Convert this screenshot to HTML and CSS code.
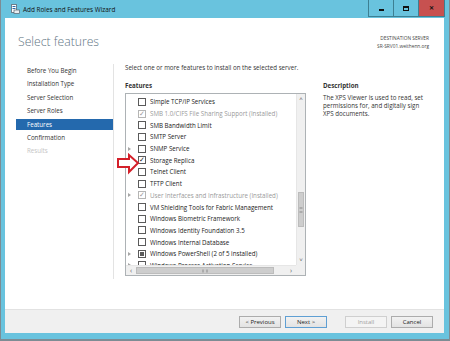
FILE: index.html
```html
<!DOCTYPE html>
<html lang="en">
<head>
  <meta charset="UTF-8" />
  <title>Add Roles and Features Wizard</title>
  <link rel="stylesheet" href="styles.css">
</head>
<body>

<div class="window">

  <div class="titlebar">
    <svg class="app-icon" width="9" height="10" viewBox="0 0 9 10">
      <rect x="0.5" y="0.5" width="5" height="8" fill="#fff" stroke="#6b7f8c"/>
      <rect x="1.5" y="2" width="3" height="1" fill="#2d6aa8"/>
      <rect x="1.5" y="4" width="3" height="1" fill="#2d6aa8"/>
      <rect x="3" y="6" width="5.5" height="3.5" fill="#e9eef2" stroke="#55636d" stroke-width="0.7"/>
    </svg>
    <span class="title-text">Add Roles and Features Wizard</span>
    <div class="win-buttons">
      <div class="win-btn"><span class="min-glyph"></span></div>
      <div class="win-btn"><span class="max-glyph"></span></div>
      <div class="win-btn close">&#x2715;</div>
    </div>
  </div>

  <div class="client">

    <div class="header">
      <h1>Select features</h1>
      <div class="dest">
        <div>DESTINATION SERVER</div>
        <div>SR-SRV01.weithenn.org</div>
      </div>
    </div>

    <div class="main">
      <nav class="steps">
        <div class="step">Before You Begin</div>
        <div class="step">Installation Type</div>
        <div class="step">Server Selection</div>
        <div class="step">Server Roles</div>
        <div class="step active">Features</div>
        <div class="step">Confirmation</div>
        <div class="step disabled">Results</div>
      </nav>

      <section class="content">
        <p class="intro">Select one or more features to install on the selected server.</p>
        <div class="columns">
          <div class="features">
            <div class="label">Features</div>
            <div class="listbox">
              <div class="items">
                <div class="item"><span class="exp"></span><span class="cb"></span>Simple TCP/IP Services</div>
                <div class="item off"><span class="exp"></span><span class="cb on">&#x2713;</span>SMB 1.0/CIFS File Sharing Support (Installed)</div>
                <div class="item"><span class="exp"></span><span class="cb"></span>SMB Bandwidth Limit</div>
                <div class="item"><span class="exp"></span><span class="cb"></span>SMTP Server</div>
                <div class="item"><span class="exp tri"></span><span class="cb"></span>SNMP Service</div>
                <div class="item"><span class="exp"></span><span class="cb on">&#x2713;</span>Storage Replica</div>
                <div class="item"><span class="exp"></span><span class="cb"></span>Telnet Client</div>
                <div class="item"><span class="exp"></span><span class="cb"></span>TFTP Client</div>
                <div class="item off"><span class="exp tri"></span><span class="cb on">&#x2713;</span>User Interfaces and Infrastructure (Installed)</div>
                <div class="item"><span class="exp"></span><span class="cb"></span>VM Shielding Tools for Fabric Management</div>
                <div class="item"><span class="exp"></span><span class="cb"></span>Windows Biometric Framework</div>
                <div class="item"><span class="exp"></span><span class="cb"></span>Windows Identity Foundation 3.5</div>
                <div class="item"><span class="exp"></span><span class="cb"></span>Windows Internal Database</div>
                <div class="item"><span class="exp tri"></span><span class="cb part"><i></i></span>Windows PowerShell (2 of 5 installed)</div>
                <div class="item"><span class="exp tri"></span><span class="cb"></span>Windows Process Activation Service</div>
              </div>
              <div class="vscroll">
                <div class="arrow">&#x2C4;</div>
                <div class="vthumb"></div>
                <div class="track"></div>
                <div class="arrow">&#x2C5;</div>
              </div>
              <div class="hscroll">
                <div class="arrow">&#x2039;</div>
                <div class="hthumb"></div>
                <div class="track"></div>
                <div class="arrow">&#x203A;</div>
              </div>
              <div class="corner"></div>
            </div>
          </div>
          <div class="description">
            <div class="label">Description</div>
            <p>The XPS Viewer is used to read, set<br>permissions for, and digitally sign<br>XPS documents.</p>
          </div>
        </div>
      </section>
    </div>

    <div class="footer">
      <button class="btn">&lt; Previous</button>
      <button class="btn default">Next &gt;</button>
      <button class="btn install" disabled>Install</button>
      <button class="btn">Cancel</button>
    </div>

    <!-- callout arrow drawn over the list -->
    <svg class="callout" width="26" height="22" viewBox="0 0 26 22">
      <path d="M2,6 H13 V2 L22,10 L13,19 V14 H2 Z" fill="#fff" stroke="#d4202a" stroke-width="2" stroke-linejoin="miter"/>
    </svg>
  </div>

</div>

</body>
</html>
```

FILE: styles.css
```css
* {
  margin: 0;
  padding: 0;
  box-sizing: border-box;
}

body {
  font-family: 'Open Sans', 'Liberation Sans', sans-serif;
  background: #fff;
  color: #333;
}

.window {
  width: 450px;
  height: 341px;
  background: #69c3de;
  border-left: 1px solid #7d8c94;
  border-right: 1px solid #7d8c94;
  border-bottom: 2px solid #7d8c94;
  display: flex;
  flex-direction: column;
}

/* title bar */
.titlebar {
  height: 18px;
  display: flex;
  align-items: center;
  padding-left: 10px;
}

.app-icon {
  margin-right: 3px;
}

.title-text {
  font-size: 6.4px;
  color: #111;
}

.win-buttons {
  margin-left: auto;
  margin-right: 4px;
  align-self: flex-start;
  display: flex;
  height: 17px;
}

.win-btn {
  width: 26px;
  height: 17px;
  border: 1px solid #3d7f92;
  border-top: none;
  margin-left: -1px;
  display: flex;
  align-items: center;
  justify-content: center;
  font-size: 6px;
  font-weight: bold;
  color: #111;
}

.win-btn.close {
  background: #c75150;
  width: 27px;
}

.min-glyph {
  width: 5px;
  height: 2px;
  background: #111;
  margin-top: 3px;
}

.max-glyph {
  width: 6px;
  height: 5px;
  border: 1px solid #111;
  border-top-width: 2px;
}

/* client area */
.client {
  position: relative;
  flex: 1;
  margin: 0 5px 6px 4px;
  background: #fff;
  display: flex;
  flex-direction: column;
}

.header {
  height: 46px;
  display: flex;
  justify-content: space-between;
  padding: 15px 15px 0 13px;
}

.header h1 {
  font-size: 12.2px;
  font-weight: 300;
  color: #5f7584;
  line-height: 18px;
}

.dest {
  text-align: right;
  font-size: 4.8px;
  line-height: 8px;
  color: #444;
  padding-top: 1px;
}

.main {
  flex: 1;
  display: flex;
}

.steps {
  width: 109px;
  padding: 0 0 0 11px;
  border-right: 1px solid #e3e3e3;
  margin-bottom: 30px;
}

.step {
  height: 11px;
  margin-bottom: 2.4px;
  padding-left: 11px;
  font-size: 6.2px;
  line-height: 11px;
  color: #333;
}

.step:first-child {
  margin-top: 1px;
}

.step.active {
  background: #2469ad;
  color: #fff;
}

.step.disabled {
  color: #c4c4c4;
}

.content {
  flex: 1;
  padding-left: 11px;
}

.intro {
  font-size: 6.2px;
  line-height: 10px;
  margin-top: -1px;
  color: #333;
}

.columns {
  display: flex;
  margin-top: 8px;
}

.label {
  font-size: 6.2px;
  font-weight: bold;
  color: #333;
  line-height: 10px;
  margin-bottom: 2px;
}

.features {
  width: 181px;
}

.listbox {
  height: 183px;
  border: 1px solid #adb2b5;
  display: grid;
  grid-template-columns: 1fr 9px;
  grid-template-rows: 1fr 10px;
}

.items {
  overflow: hidden;
  padding-top: 2px;
}

.item {
  height: 11.7px;
  display: flex;
  align-items: center;
  font-size: 6.2px;
  color: #222;
  white-space: nowrap;
}

.item.off {
  color: #9a9a9a;
}

.exp {
  width: 12px;
  flex-shrink: 0;
  padding-left: 2px;
}

.exp.tri::before {
  content: '';
  display: block;
  width: 0;
  height: 0;
  border-top: 2.5px solid transparent;
  border-bottom: 2.5px solid transparent;
  border-left: 3px solid #a6a6a6;
}

.cb {
  width: 8px;
  height: 8px;
  border: 1px solid #5a5a5a;
  background: #fff;
  margin-right: 4px;
  flex-shrink: 0;
  font-size: 6.5px;
  line-height: 6px;
  text-align: center;
  color: #222;
  display: flex;
  align-items: center;
  justify-content: center;
}

.item.off .cb {
  border-color: #b5b5b5;
  color: #9a9a9a;
}

.cb.part i {
  width: 4px;
  height: 4px;
  background: #5a5a5a;
}

.vscroll {
  background: #f0f0f0;
  border-left: 1px solid #e6e6e6;
  display: flex;
  flex-direction: column;
}

.vscroll .arrow,
.hscroll .arrow {
  height: 10px;
  font-size: 6px;
  color: #606060;
  display: flex;
  align-items: center;
  justify-content: center;
}

.vthumb {
  height: 35px;
  margin-top: 88px;
  background: #cdcdcd;
  border: 1px solid #bcbcbc;
  margin-left: 1px;
  margin-right: 1px;
  position: relative;
}

.vthumb::after,
.hthumb::after {
  content: '';
  position: absolute;
  left: 50%;
  top: 50%;
  transform: translate(-50%, -50%);
  border: 1px solid #8a8a8a;
  border-left: none;
  border-right: none;
}

.vthumb::after {
  width: 3px;
  height: 3px;
}

.hthumb::after {
  width: 3px;
  height: 3px;
  border: 1px solid #8a8a8a;
  border-top: none;
  border-bottom: none;
}

.track {
  flex: 1;
}

.hscroll {
  background: #f0f0f0;
  border-top: 1px solid #e6e6e6;
  display: flex;
}

.hscroll .arrow {
  width: 10px;
  height: auto;
  font-size: 7px;
}

.hthumb {
  width: 138px;
  background: #cdcdcd;
  border: 1px solid #bcbcbc;
  margin: 1px 0;
  position: relative;
}

.corner {
  background: #f0f0f0;
}

.description {
  padding-left: 17px;
}

.description p {
  font-size: 6.2px;
  line-height: 8px;
  color: #333;
  margin-top: 3px;
}

/* footer */
.footer {
  height: 24px;
  background: #f0f0f0;
  border-top: 1px solid #e2e2e2;
  display: flex;
  align-items: center;
  justify-content: flex-end;
  padding-right: 11px;
  gap: 4px;
}

.btn {
  width: 42px;
  height: 12px;
  font-family: 'Open Sans', 'Liberation Sans', sans-serif;
  font-size: 6px;
  color: #222;
  background: linear-gradient(#f2f2f2, #e3e3e3);
  border: 1px solid #acacac;
}

.btn.default {
  border-color: #5f9fd3;
}

.btn.install {
  margin-left: 14px;
  color: #a0a0a0;
  background: #f4f4f4;
  border-color: #cfcfcf;
}

.callout {
  position: absolute;
  left: 111px;
  top: 135px;
}
```
